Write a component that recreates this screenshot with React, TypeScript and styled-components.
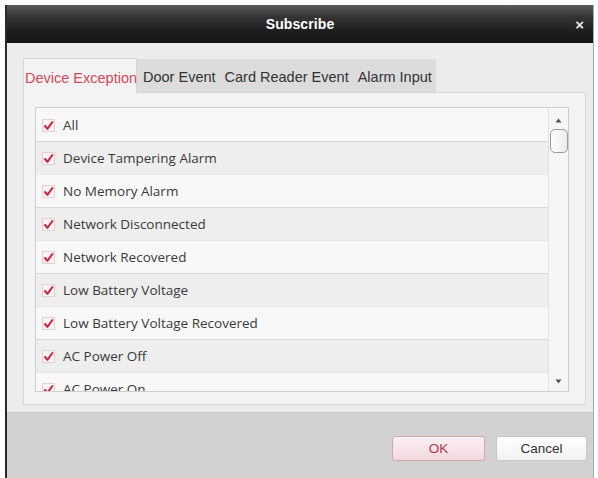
import React from "react";
import styled, { createGlobalStyle } from "styled-components";

const Global = createGlobalStyle`
  html, body { margin: 0; padding: 0; background: #ffffff; }
  * { box-sizing: border-box; }
`;

const Dialog = styled.div`
  margin: 5px 0 0 5px;
  width: 589px;
  height: 473px;
  display: flex;
  flex-direction: column;
  border-left: 2px solid #2a2a2a;
  border-right: 1px solid #a9a9a9;
  background: #ececec;
`;

const TitleBar = styled.div`
  height: 38px;
  flex: none;
  display: grid;
  grid-template-columns: 1fr auto 1fr;
  align-items: center;
  background: linear-gradient(#5a5a5a 0%, #353535 30%, #1d1d1d 70%, #141414 100%);
  color: #fff;
  font-family: "Liberation Sans", Arial, sans-serif;
`;

const Title = styled.div`
  grid-column: 2;
  font-size: 14px;
  font-weight: bold;
  letter-spacing: 0.1px;
`;

const Close = styled.div`
  grid-column: 3;
  justify-self: end;
  margin-right: 9px;
  font-size: 15px;
  font-weight: bold;
  line-height: 1;
  color: #e8e8e8;
`;

const Body = styled.div`
  flex: 1;
  display: flex;
  flex-direction: column;
  padding: 15px 7px 0 16px;
`;

const TabBar = styled.div`
  display: flex;
  align-items: stretch;
  height: 34px;
  font-family: "Liberation Sans", Arial, sans-serif;
  font-size: 14.5px;
`;

const Tab = styled.div<{ $active?: boolean }>`
  display: flex;
  align-items: center;
  padding: ${(p) => (p.$active ? "3px 0 0 1px" : "2px 0 0 6px")};
  width: ${(p) => (p.$active ? "114px" : "auto")};
  color: ${(p) => (p.$active ? "#d4475c" : "#333")};
  background: ${(p) => (p.$active ? "#f3f3f3" : "#dcdcdc")};
  border: ${(p) => (p.$active ? "1px solid #d6d6d6" : "none")};
  border-bottom: none;
  position: relative;
  z-index: ${(p) => (p.$active ? 1 : 0)};
  margin-bottom: ${(p) => (p.$active ? "-1px" : "0")};
  white-space: nowrap;
`;

const TabStrip = styled.div`
  display: flex;
  background: #dcdcdc;
  margin-top: 1px;
  padding-right: 4px;
  gap: 3px;
`;

const Pane = styled.div`
  height: 313px;
  background: #f3f3f3;
  border: 1px solid #d6d6d6;
  padding: 14px 16px 12px 11px;
`;

const ListBox = styled.div`
  height: 100%;
  display: grid;
  grid-template-columns: 1fr 20px;
  border: 1px solid #cfcfcf;
  background: #f8f8f8;
  overflow: hidden;
`;

const Rows = styled.div`
  padding-top: 1px;
  overflow: hidden;
`;

const Row = styled.div<{ $alt?: boolean }>`
  height: 33px;
  display: flex;
  align-items: center;
  gap: 8px;
  padding-left: 6px;
  background: ${(p) => (p.$alt ? "#eeeeee" : "#f8f8f8")};
  border-bottom: 1px solid ${(p) => (p.$alt ? "#e6e6e6" : "#d9d9d9")};
  font-family: "Open Sans", "Noto Sans", sans-serif;
  font-size: 13.5px;
  color: #3a3a3a;
`;

const Scroll = styled.div`
  display: flex;
  flex-direction: column;
  align-items: center;
  background: #f6f6f6;
  border-left: 1px solid #e2e2e2;
  padding: 6px 0 4px;
`;

const Arrow = styled.div`
  height: 12px;
  display: flex;
  align-items: center;
  justify-content: center;
`;

const Thumb = styled.div`
  width: 18px;
  height: 24px;
  margin-top: 3px;
  border: 1px solid #9c9c9c;
  border-radius: 5px;
  background: linear-gradient(90deg, #ffffff, #ececec);
`;

const Spacer = styled.div`
  flex: 1;
`;

const Footer = styled.div`
  height: 66px;
  flex: none;
  margin-top: 7px;
  display: flex;
  align-items: flex-start;
  justify-content: flex-end;
  gap: 11px;
  padding: 23px 6px 0 0;
  background: #d2d2d2;
  border-top: 1px solid #c9c9c9;
`;

const Button = styled.button<{ $primary?: boolean }>`
  width: ${(p) => (p.$primary ? "93px" : "91px")};
  height: 25px;
  border-radius: 3px;
  font-family: "Liberation Sans", Arial, sans-serif;
  font-size: 13.5px;
  color: ${(p) => (p.$primary ? "#b23a4c" : "#333")};
  border: 1px solid ${(p) => (p.$primary ? "#d7a4ac" : "#c6c6c6")};
  background: ${(p) =>
    p.$primary
      ? "linear-gradient(#fbf0f2, #f2d9de)"
      : "linear-gradient(#ffffff, #f2f2f2)"};
`;

const Check = () => (
  <svg width="13" height="13" viewBox="0 0 13 13">
    <rect x="0.5" y="0.5" width="12" height="12" fill="#fbf3f4" stroke="#e6cfd3" />
    <path d="M3 7 L5.4 9.8 L10.4 3" fill="none" stroke="#c9283f" strokeWidth="2.1" strokeLinecap="round" strokeLinejoin="round" />
  </svg>
);

const UpTri = () => (
  <svg width="7" height="5" viewBox="0 0 7 5">
    <path d="M0.5 4.5 L3.5 0.5 L6.5 4.5 Z" fill="#555" />
  </svg>
);

const DownTri = () => (
  <svg width="7" height="5" viewBox="0 0 7 5">
    <path d="M0.5 0.5 L3.5 4.5 L6.5 0.5 Z" fill="#555" />
  </svg>
);

const items = [
  "All",
  "Device Tampering Alarm",
  "No Memory Alarm",
  "Network Disconnected",
  "Network Recovered",
  "Low Battery Voltage",
  "Low Battery Voltage Recovered",
  "AC Power Off",
  "AC Power On",
];

export default function App() {
  return (
    <>
      <Global />
      <Dialog>
        <TitleBar>
          <Title>Subscribe</Title>
          <Close>×</Close>
        </TitleBar>
        <Body>
          <TabBar>
            <Tab $active>Device Exception</Tab>
            <TabStrip>
              <Tab>Door Event</Tab>
              <Tab>Card Reader Event</Tab>
              <Tab>Alarm Input</Tab>
            </TabStrip>
          </TabBar>
          <Pane>
            <ListBox>
              <Rows>
                {items.map((t, i) => (
                  <Row key={t} $alt={i % 2 === 1}>
                    <Check />
                    <span>{t}</span>
                  </Row>
                ))}
              </Rows>
              <Scroll>
                <Arrow>
                  <UpTri />
                </Arrow>
                <Thumb />
                <Spacer />
                <Arrow>
                  <DownTri />
                </Arrow>
              </Scroll>
            </ListBox>
          </Pane>
        </Body>
        <Footer>
          <Button $primary>OK</Button>
          <Button>Cancel</Button>
        </Footer>
      </Dialog>
    </>
  );
}
